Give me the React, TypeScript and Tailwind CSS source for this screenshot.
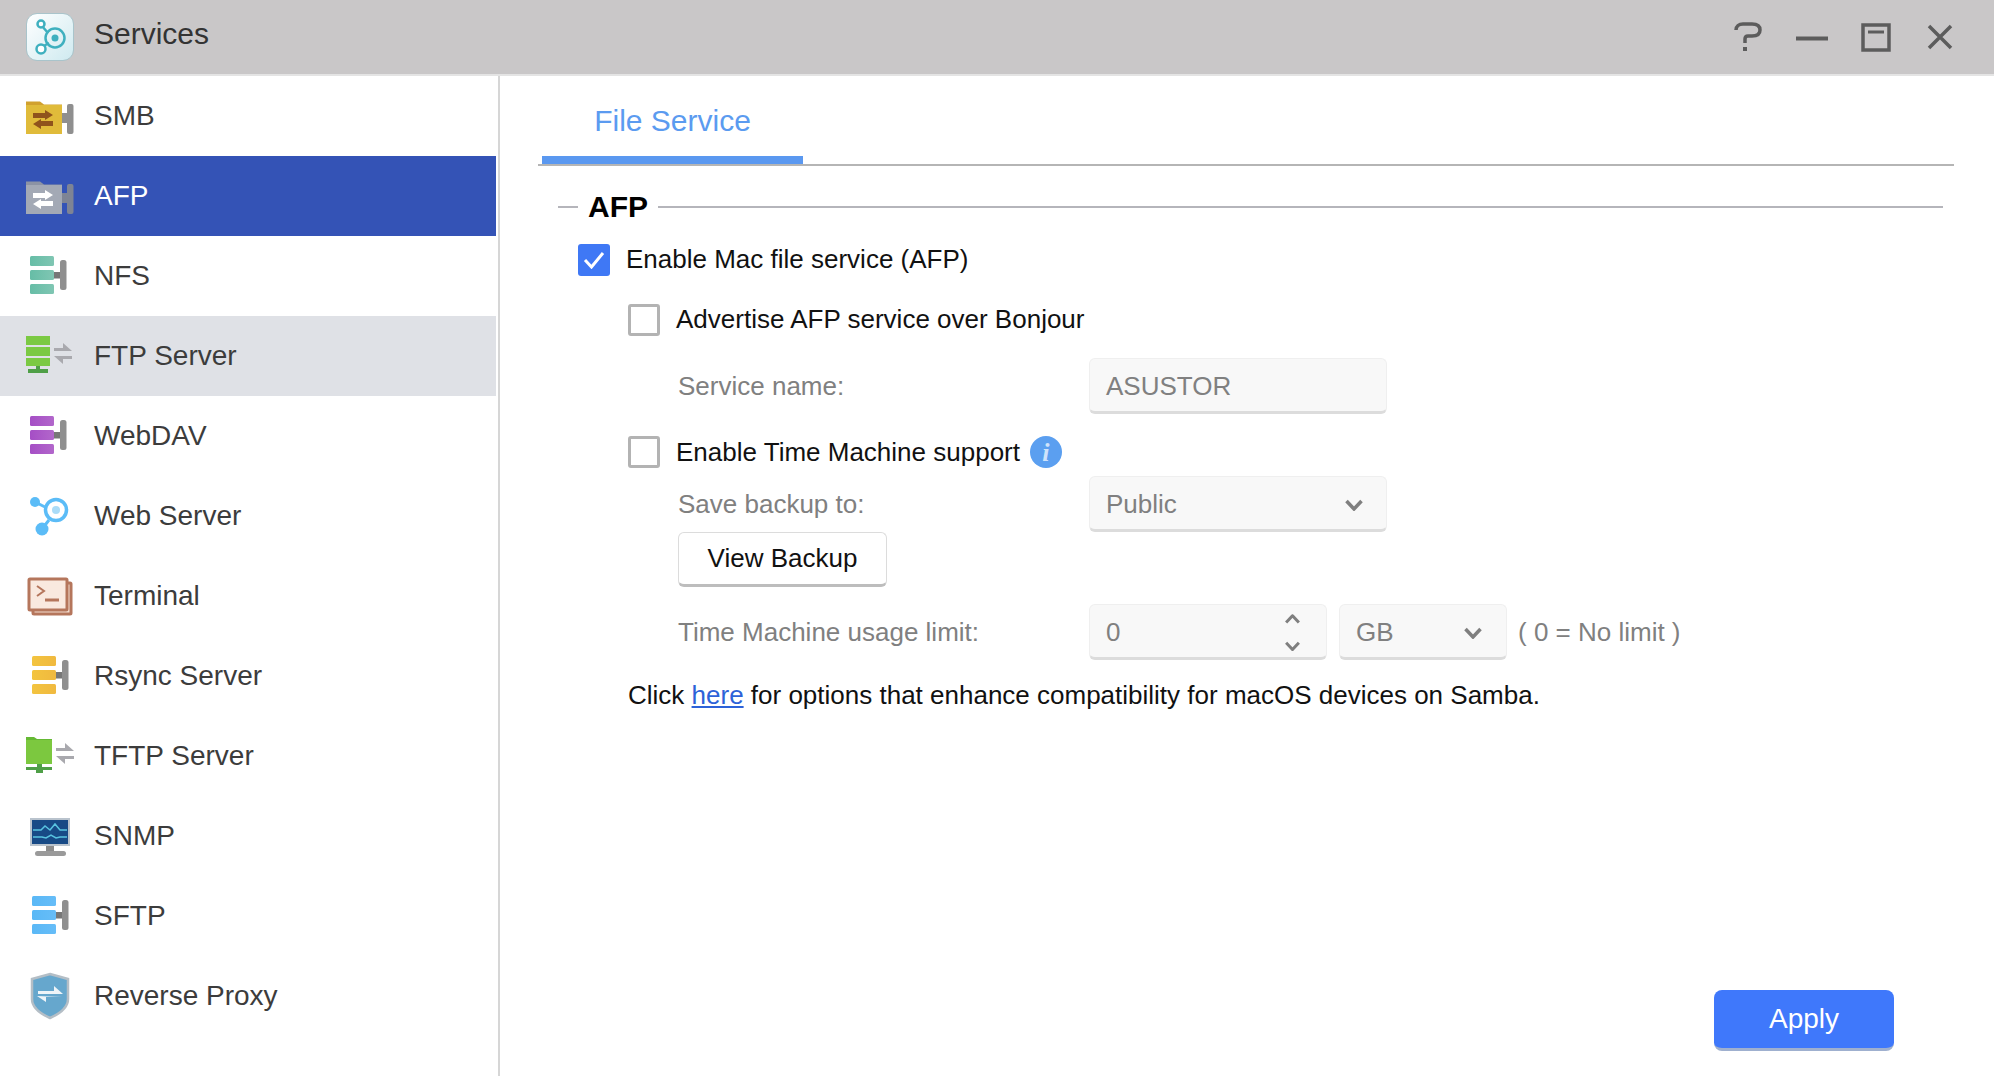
import React from "react";

// folder + valve, used by SMB / AFP
const FolderValve = ({ body, tab, arrow, valve }: { body: string; tab: string; arrow: string; valve: string }) => (
  <svg width="48" height="48" viewBox="0 0 48 48">
    <path d="M0 9.500h14l4 3h18v4H0z" fill={tab} />
    <rect x="0" y="13" width="36" height="29" fill={body} />
    <path d="M7 21h12v-3l8 5-8 5v-2H7zM27 29H15v-2l-8 5 8 5v-3h12z" fill={arrow} />
    <rect x="36" y="21" width="8" height="10" fill={valve} />
    <rect x="41" y="12" width="6.500" height="30" rx="2" fill={valve} />
  </svg>
);

const StackValve = ({ color, dark, x = 4 }: { color: string; dark: string; x?: number }) => (
  <svg width="48" height="48" viewBox="0 0 48 48">
    <defs>
      <linearGradient id={`st${color.slice(1)}`} x1="0" y1="0" x2="1" y2="0">
        <stop offset="0" stopColor={color} />
        <stop offset="1" stopColor={dark} />
      </linearGradient>
    </defs>
    <g transform={`translate(${x} 0)`} fill={`url(#st${color.slice(1)})`}>
      <rect x="0" y="4" width="24" height="10" rx="1.500" />
      <rect x="0" y="18" width="24" height="10" rx="1.500" />
      <rect x="0" y="32" width="24" height="10" rx="1.500" />
    </g>
    <g transform={`translate(${x} 0)`} fill="#8f8f8f">
      <rect x="24" y="20" width="7" height="6.500" fill="#777" />
      <rect x="30" y="8" width="6.500" height="30" rx="2.500" />
    </g>
  </svg>
);

const SwapArrows = ({ x }: { x: number }) => (
  <path
    transform={`translate(${x} 0)`}
    d="M0 16h9v-5l9 8H0zM18 27H9v5l-9-8h18z"
    fill="#a9a9ae"
  />
);

const FtpIcon = () => (
  <svg width="48" height="48" viewBox="0 0 48 48">
    <rect x="0" y="4" width="24" height="9" fill="#7bc943" />
    <rect x="0" y="15" width="24" height="9" fill="#7bc943" />
    <rect x="0" y="26" width="24" height="8" fill="#7bc943" />
    <path d="M10 34h4v3h8v4H2v-4h8z" fill="#4f9f47" />
    <SwapArrows x={28} />
  </svg>
);

const TftpIcon = () => (
  <svg width="48" height="48" viewBox="0 0 48 48">
    <path d="M0 5h8l3 2h15v4H0z" fill="#65b934" />
    <rect x="0" y="8" width="26" height="24" fill="#7cc83f" />
    <path d="M11 32h5v3h10v3H0v-3h11z" fill="#4f9f47" />
    <rect x="10" y="38" width="7" height="3" fill="#4f9f47" />
    <SwapArrows x={30} />
  </svg>
);

const WebIcon = () => (
  <svg width="48" height="48" viewBox="0 0 48 48">
    <circle cx="30" cy="18" r="10.500" fill="#fff" stroke="#5bbcf7" strokeWidth="3.500" />
    <circle cx="30" cy="18" r="4" fill="#aadcf8" />
    <path d="M9 10l12 6M16 37l7-9" stroke="#5bbcf7" strokeWidth="3" />
    <circle cx="9" cy="10" r="5" fill="#5bbcf7" />
    <circle cx="16" cy="37" r="6.500" fill="#5bbcf7" />
  </svg>
);

const TerminalIcon = () => (
  <svg width="48" height="48" viewBox="0 0 48 48">
    <rect x="7" y="11" width="38" height="31" rx="1" fill="#f3dccf" stroke="#b5765c" strokeWidth="3" />
    <rect x="3" y="7" width="38" height="31" rx="1" fill="#f9e9df" stroke="#b5765c" strokeWidth="3" />
    <path d="M11 14l7 5-7 5" fill="none" stroke="#b5765c" strokeWidth="2" />
    <path d="M19 28h14" stroke="#b5765c" strokeWidth="3" />
  </svg>
);

const SnmpIcon = () => (
  <svg width="48" height="48" viewBox="0 0 48 48">
    <rect x="5" y="7" width="38" height="26" fill="#174a86" stroke="#b9c3cd" strokeWidth="2" />
    <path d="M7 18h8l4-4 5 4 5-6 5 6h7" fill="none" stroke="#58c3e0" strokeWidth="1.500" />
    <path d="M7 25h9l4 1 5-3 5 3 4-1h7" fill="none" stroke="#58c3e0" strokeWidth="1.500" />
    <rect x="20" y="34" width="8" height="5" fill="#8c8c8c" />
    <rect x="9" y="39" width="31" height="5" rx="2.500" fill="#9a9a9a" />
  </svg>
);

const ShieldIcon = () => (
  <svg width="48" height="48" viewBox="0 0 48 48">
    <path d="M24 2l18 5v20c0 9-9 15-18 19-9-4-18-10-18-19V7z" fill="#66a7cd" stroke="#b4bec6" strokeWidth="2.500" />
    <path d="M12 19h16v-5l9 8H12zM36 25H20v5l-9-6z" fill="#eef4f8" />
  </svg>
);

const services = [
  { name: "SMB", icon: <FolderValve body="#e0bb3a" tab="#d1a12f" arrow="#8f531c" valve="#8f8f8f" /> },
  { name: "AFP", icon: <FolderValve body="#a3a9b5" tab="#8c93a4" arrow="#ffffff" valve="#7e8494" /> },
  { name: "NFS", icon: <StackValve color="#66bda6" dark="#80c6b3" /> },
  { name: "FTP Server", icon: <FtpIcon /> },
  { name: "WebDAV", icon: <StackValve color="#a54ec5" dark="#b267cb" /> },
  { name: "Web Server", icon: <WebIcon /> },
  { name: "Terminal", icon: <TerminalIcon /> },
  { name: "Rsync Server", icon: <StackValve color="#f3c43f" dark="#f0b93f" x={6} /> },
  { name: "TFTP Server", icon: <TftpIcon /> },
  { name: "SNMP", icon: <SnmpIcon /> },
  { name: "SFTP", icon: <StackValve color="#5ab8f6" dark="#66bdf8" x={6} /> },
  { name: "Reverse Proxy", icon: <ShieldIcon /> },
];

const Chevron = ({ up = false, size = 20 }: { up?: boolean; size?: number }) => (
  <svg width={size} height={size * 0.6} viewBox="0 0 20 12" className={up ? "rotate-180" : ""}>
    <path d="M2.500 2l7.500 8 7.500-8" fill="none" stroke="#7f7f7f" strokeWidth="3.500" />
  </svg>
);

const Checkbox = ({ checked = false }: { checked?: boolean }) =>
  checked ? (
    <div className="flex h-[32px] w-[32px] items-center justify-center rounded-[3px] bg-[#3f78f5]">
      <svg width="22" height="18" viewBox="0 0 22 18">
        <path d="M2 9l6.500 7L20 2" fill="none" stroke="#fff" strokeWidth="3" />
      </svg>
    </div>
  ) : (
    <div className="h-[32px] w-[32px] rounded-[3px] border-[3px] border-[#b3b3b3] bg-white" />
  );

const fieldClass =
  "flex h-[56px] items-center rounded-[6px] border border-[#efefef] border-b-[3px] border-b-[#dcdcdc] bg-[#f8f8f8] pt-[3px] text-[#808080]";

export default function App() {
  return (
    <div className="flex h-[1076px] w-[1994px] flex-col overflow-hidden bg-white font-['Liberation_Sans',Arial,sans-serif]">
      <header className="flex h-[76px] shrink-0 items-center border-b-2 border-[#e4e4e4] bg-[#c9c7c8] pl-[26px] pr-[22px]">
        <div className="flex h-[48px] w-[48px] items-center justify-center rounded-[11px] border border-[#a9c4cb] bg-gradient-to-br from-white to-[#cfeaf0]">
          <svg width="40" height="40" viewBox="0 0 40 40">
            <circle cx="25" cy="21" r="9.500" fill="none" stroke="#3fb0bf" strokeWidth="2.500" />
            <circle cx="25" cy="21" r="3.500" fill="#3fb0bf" />
            <path d="M12 9l6 7M12 30l7-4" stroke="#3fb0bf" strokeWidth="2.500" />
            <circle cx="11" cy="7" r="3.500" fill="#fff" stroke="#3fb0bf" strokeWidth="2.500" />
            <circle cx="11" cy="32" r="4.500" fill="#fff" stroke="#3fb0bf" strokeWidth="2.500" />
          </svg>
        </div>
        <span className="mb-[7px] ml-[20px] text-[30px] text-[#333]">Services</span>
        <div className="ml-auto flex items-center">
          <div className="flex w-[64px] justify-center">
            <svg width="28" height="30" viewBox="0 0 28 30">
              <path d="M2 8c0-4 3-6 7-6h9c5 0 8 2 8 6s-3 6-8 6h-4c-2 0-3 1-3 3v4" fill="none" stroke="#5c5c5c" strokeWidth="3.500" />
              <rect x="9" y="25" width="4" height="4" fill="#5c5c5c" />
            </svg>
          </div>
          <div className="flex w-[64px] justify-center">
            <svg width="32" height="30" viewBox="0 0 32 30">
              <path d="M0 16.500h32" stroke="#5c5c5c" strokeWidth="4" />
            </svg>
          </div>
          <div className="flex w-[64px] justify-center">
            <svg width="30" height="30" viewBox="0 0 30 30">
              <rect x="2" y="3" width="26" height="25" fill="none" stroke="#5c5c5c" strokeWidth="3.500" />
              <path d="M7 10h16" stroke="#5c5c5c" strokeWidth="3" />
            </svg>
          </div>
          <div className="flex w-[64px] justify-center">
            <svg width="28" height="30" viewBox="0 0 28 30">
              <path d="M3 4l22 22M25 4L3 26" stroke="#5c5c5c" strokeWidth="3.500" />
            </svg>
          </div>
        </div>
      </header>

      <div className="flex min-h-0 flex-1">
        <aside className="w-[500px] shrink-0 border-r-2 border-[#d6d6d6] pr-[2px]">
          {services.map((s) => (
            <div
              key={s.name}
              className={
                s.name === "AFP"
                  ? "flex h-[80px] items-center gap-[20px] bg-[#3453b6] pl-[26px] text-[28px] text-white"
                  : s.name === "FTP Server"
                    ? "flex h-[80px] items-center gap-[20px] bg-[#dfe1e6] pl-[26px] text-[28px] text-[#3c3c3c]"
                    : "flex h-[80px] items-center gap-[20px] pl-[26px] text-[28px] text-[#3c3c3c]"
              }
            >
              {s.icon}
              <span>{s.name}</span>
            </div>
          ))}
        </aside>

        <main className="flex min-w-0 flex-1 flex-col pl-[38px] pr-[40px] text-[26px] text-[#111]">
          <div className="flex h-[90px] shrink-0 border-b-2 border-[#b5b5b5] pl-[4px]">
            <div className="flex h-[88px] w-[261px] items-center justify-center border-b-[8px] border-[#5a98f0] pt-[8px] text-[30px] text-[#5b9bf0]">
              File Service
            </div>
          </div>

          <section className="ml-[20px] mr-[11px]">
            <div className="mt-[24px] flex h-[34px] items-center">
              <div className="h-[2px] w-[20px] bg-[#b5b5bb]" />
              <h2 className="mx-[10px] pb-[2px] text-[30px] font-bold text-black">AFP</h2>
              <div className="h-[2px] flex-1 bg-[#b5b5bb]" />
            </div>

            <div className="ml-[20px] mt-[20px] flex h-[32px] items-center gap-[16px]">
              <Checkbox checked />
              <span className="pb-[1px]">Enable Mac file service (AFP)</span>
            </div>

            <div className="ml-[70px]">
              <div className="mt-[28px] flex h-[32px] items-center gap-[16px]">
                <Checkbox />
                <span className="pb-[1px]">Advertise AFP service over Bonjour</span>
              </div>

              <div className="ml-[50px] mt-[22px] flex items-center">
                <span className="w-[411px] text-[#808080]">Service name:</span>
                <div className={`${fieldClass} w-[298px] pl-[16px]`}>ASUSTOR</div>
              </div>

              <div className="mt-[22px] flex h-[32px] items-center gap-[16px]">
                <Checkbox />
                <span>Enable Time Machine support</span>
                <div className="-ml-[6px] flex h-[32px] w-[32px] items-center justify-center rounded-full bg-[#5b9ff0] font-['Liberation_Serif',serif] text-[26px] font-bold italic text-[#cfe3fb]">
                  i
                </div>
              </div>

              <div className="ml-[50px] mt-[8px] flex items-center">
                <span className="w-[411px] text-[#808080]">Save backup to:</span>
                <div className={`${fieldClass} w-[298px] justify-between pl-[16px] pr-[22px]`}>
                  Public
                  <Chevron />
                </div>
              </div>

              <button className="ml-[50px] block h-[55px] w-[209px] rounded-[6px] border border-[#dcdcdc] border-b-[3px] border-b-[#bdbdbd] bg-white text-[26px] text-[#111]">
                View Backup
              </button>

              <div className="ml-[50px] mt-[17px] flex items-center">
                <span className="w-[411px] text-[#808080]">Time Machine usage limit:</span>
                <div className={`${fieldClass} w-[238px] justify-between pl-[16px] pr-[25px]`}>
                  0
                  <div className="flex flex-col gap-[17px]">
                    <Chevron up size={17} />
                    <Chevron size={17} />
                  </div>
                </div>
                <div className={`${fieldClass} ml-[12px] w-[168px] justify-between pl-[16px] pr-[23px]`}>
                  GB
                  <Chevron />
                </div>
                <span className="ml-[11px] text-[#808080]">( 0 = No limit )</span>
              </div>

              <p className="mt-[17px] h-[36px] leading-[36px]">
                Click <a className="text-[#2d62d8] underline">here</a> for options that enhance compatibility for macOS devices on Samba.
              </p>
            </div>
          </section>

          <button className="mb-[25px] mr-[60px] mt-auto h-[61px] w-[180px] self-end rounded-[8px] border-b-[3px] border-[#9fb0cf] bg-[#3f78fb] text-[28px] text-white">
            Apply
          </button>
        </main>
      </div>
    </div>
  );
}
